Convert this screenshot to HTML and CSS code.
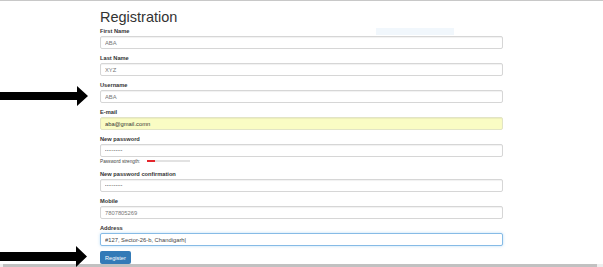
FILE: index.html
```html
<!DOCTYPE html>
<html lang="en">
<head>
    <meta charset="UTF-8">
    <title>Registration</title>
    <link rel="stylesheet" href="styles.css">
</head>
<body>
    <div class="topbar"></div>
    <div class="container">
        <h2>Registration</h2>
        <div class="field">
            <label for="first">First Name</label>
            <input type="text" id="first" value="ABA">
        </div>
        <div class="field">
            <label for="last">Last Name</label>
            <input type="text" id="last" value="XYZ">
        </div>
        <div class="field">
            <label for="username">Username</label>
            <input type="text" id="username" value="ABA">
        </div>
        <div class="field">
            <label for="email">E-mail</label>
            <input type="text" id="email" class="autofill" value="aba@gmail.comn">
        </div>
        <div class="field">
            <label for="pass1">New password</label>
            <input type="password" id="pass1" class="secret" value="abcdefghij">
            <div class="strength">
                <span>Password strength:</span>
                <div class="meter"><div class="meter-fill"></div></div>
            </div>
        </div>
        <div class="field">
            <label for="pass2">New password confirmation</label>
            <input type="password" id="pass2" class="secret" value="abcdefghij">
        </div>
        <div class="field">
            <label for="mobile">Mobile</label>
            <input type="text" id="mobile" value="7807805269">
        </div>
        <div class="field">
            <label for="address">Address</label>
            <input type="text" id="address" class="focused" value="#127, Sector-26-b, Chandigarh|">
        </div>
        <button>Register</button>
    </div>
    <div class="scrollbar"><div class="thumb"></div></div>

    <!-- annotations drawn on top of the page -->
    <div class="ghost"></div>
    <svg class="arrow arrow-one" width="90" height="24" viewBox="0 0 90 24">
        <polygon points="0,8 77,8 77,2 88,12 77,22 77,16 0,16" fill="#000"/>
    </svg>
    <svg class="arrow arrow-two" width="90" height="24" viewBox="0 0 90 24">
        <polygon points="0,7 76,7 76,1 87,11.5 76,22 76,16 0,16" fill="#000"/>
    </svg>
</body>
</html>
```
FILE: styles.css
```css
html, body {
    margin: 0;
    height: 267px;
    overflow: hidden;
}
body {
    background: #fff;
    font-family: "Liberation Sans", Arial, sans-serif;
    color: #333;
    position: relative;
}
.topbar {
    height: 1px;
    background: #c8c8c8;
}
.container {
    padding-left: 100px;
}
h2 {
    margin: 7px 0 1px;
    font-size: 14.5px;
    line-height: 18px;
    font-weight: normal;
    color: #333;
}
.field {
    margin-bottom: 5px;
}
label {
    display: block;
    font-size: 5.7px;
    font-weight: bold;
    line-height: 9px;
    color: #333;
}
input {
    display: block;
    box-sizing: border-box;
    width: 403px;
    height: 13px;
    margin: 0;
    padding: 0 4px;
    border: 1px solid #d6d6d6;
    border-radius: 2px;
    box-shadow: inset 0 1px 1px rgba(0, 0, 0, 0.06);
    font-family: "Liberation Sans", Arial, sans-serif;
    font-size: 5.8px;
    color: #777;
    background: #fff;
    outline: none;
}
input.autofill {
    background: #fafcc4;
    border-color: #e2e4c6;
    color: #333;
}
input.secret {
    color: #666;
    font-size: 3.4px;
    letter-spacing: 0.6px;
}
input.focused {
    border-color: #86bbe6;
    box-shadow: 0 0 3px rgba(102, 175, 233, 0.45);
    color: #444;
}
.strength {
    display: flex;
    align-items: center;
    height: 8px;
    font-size: 4.7px;
    color: #444;
}
.meter {
    width: 43px;
    height: 2px;
    margin-left: 7px;
    background: #e2e2e2;
}
.meter-fill {
    width: 8px;
    height: 2px;
    background: #e4262c;
}
button {
    display: block;
    height: 13px;
    padding: 0 5px;
    margin: 0;
    border: none;
    border-radius: 2px;
    background: #337ab7;
    color: #fff;
    font-family: "Liberation Sans", Arial, sans-serif;
    font-size: 5.6px;
    cursor: pointer;
}
.scrollbar {
    height: 3px;
    background: #eeeeee;
    padding: 0 6px 0 3px;
}
.thumb {
    height: 3px;
    background: #c1c1c1;
}
.ghost {
    position: absolute;
    left: 376px;
    top: 28px;
    width: 78px;
    height: 7px;
    background: #f1f7fc;
}
.arrow {
    position: absolute;
    left: 0;
}
.arrow-one {
    top: 84px;
}
.arrow-two {
    top: 245px;
}
```
